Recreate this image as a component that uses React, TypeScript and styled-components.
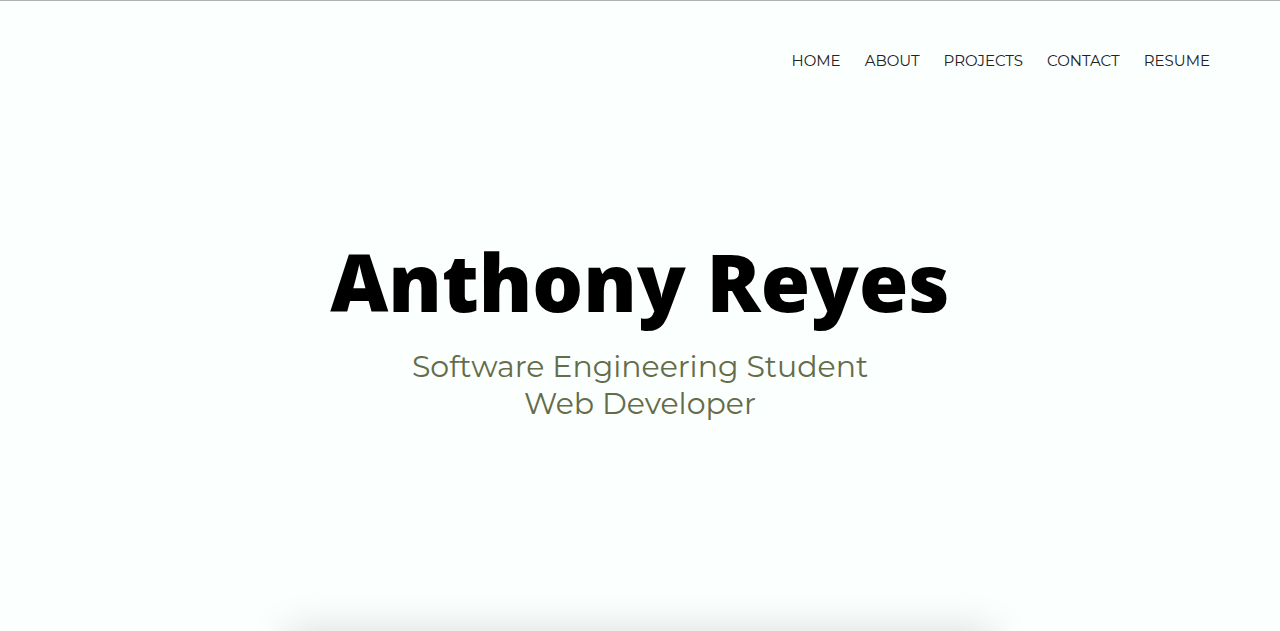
import React from "react";
import styled, { createGlobalStyle } from "styled-components";

const GlobalStyle = createGlobalStyle`
  * { box-sizing: border-box; }
  body {
    margin: 0;
    background: #fbfffe;
    font-family: Montserrat, Inter, "Open Sans", sans-serif;
    -webkit-font-smoothing: antialiased;
  }
`;

const Page = styled.div`
  display: flex;
  flex-direction: column;
  min-height: 100vh;
  border-top: 1px solid #b0b3b2;
  overflow: hidden;
`;

const Nav = styled.nav`
  display: flex;
  justify-content: flex-end;
  flex-wrap: wrap;
  gap: 24px;
  padding: 50px 70px 0;
`;

const NavLink = styled.a`
  color: #222;
  font-size: 15px;
  line-height: 20px;
  text-decoration: none;
`;

const Hero = styled.main`
  flex: 1;
  display: flex;
  flex-direction: column;
  align-items: center;
  padding-top: 154px;
  text-align: center;
`;

const Name = styled.h1`
  margin: 0;
  color: #000;
  font-family: "Open Sans", sans-serif;
  font-size: 80px;
  font-weight: 800;
  line-height: 112px;
`;

const Roles = styled.div`
  padding-top: 11px;
`;

const Role = styled.p`
  margin: 0;
  color: #646c49;
  font-size: 30px;
  font-weight: 400;
  line-height: 37px;
`;

/* The next section's card waits just below the fold; only its shadow shows. */
const NextCard = styled.div`
  flex: none;
  width: 704px;
  max-width: 80%;
  height: 120px;
  margin: 0 auto -120px;
  box-shadow: 0 0 40px rgba(0, 0, 0, 0.15);
`;

const links = ["Home", "About", "Projects", "Contact", "Resume"];

export default function App() {
  return (
    <Page>
      <GlobalStyle />
      <Nav>
        {links.map((label) => (
          <NavLink key={label} href={`#${label.toLowerCase()}`}>
            {label.toUpperCase()}
          </NavLink>
        ))}
      </Nav>
      <Hero>
        <Name>Anthony Reyes</Name>
        <Roles>
          <Role>Software Engineering Student</Role>
          <Role>Web Developer</Role>
        </Roles>
      </Hero>
      <NextCard />
    </Page>
  );
}
